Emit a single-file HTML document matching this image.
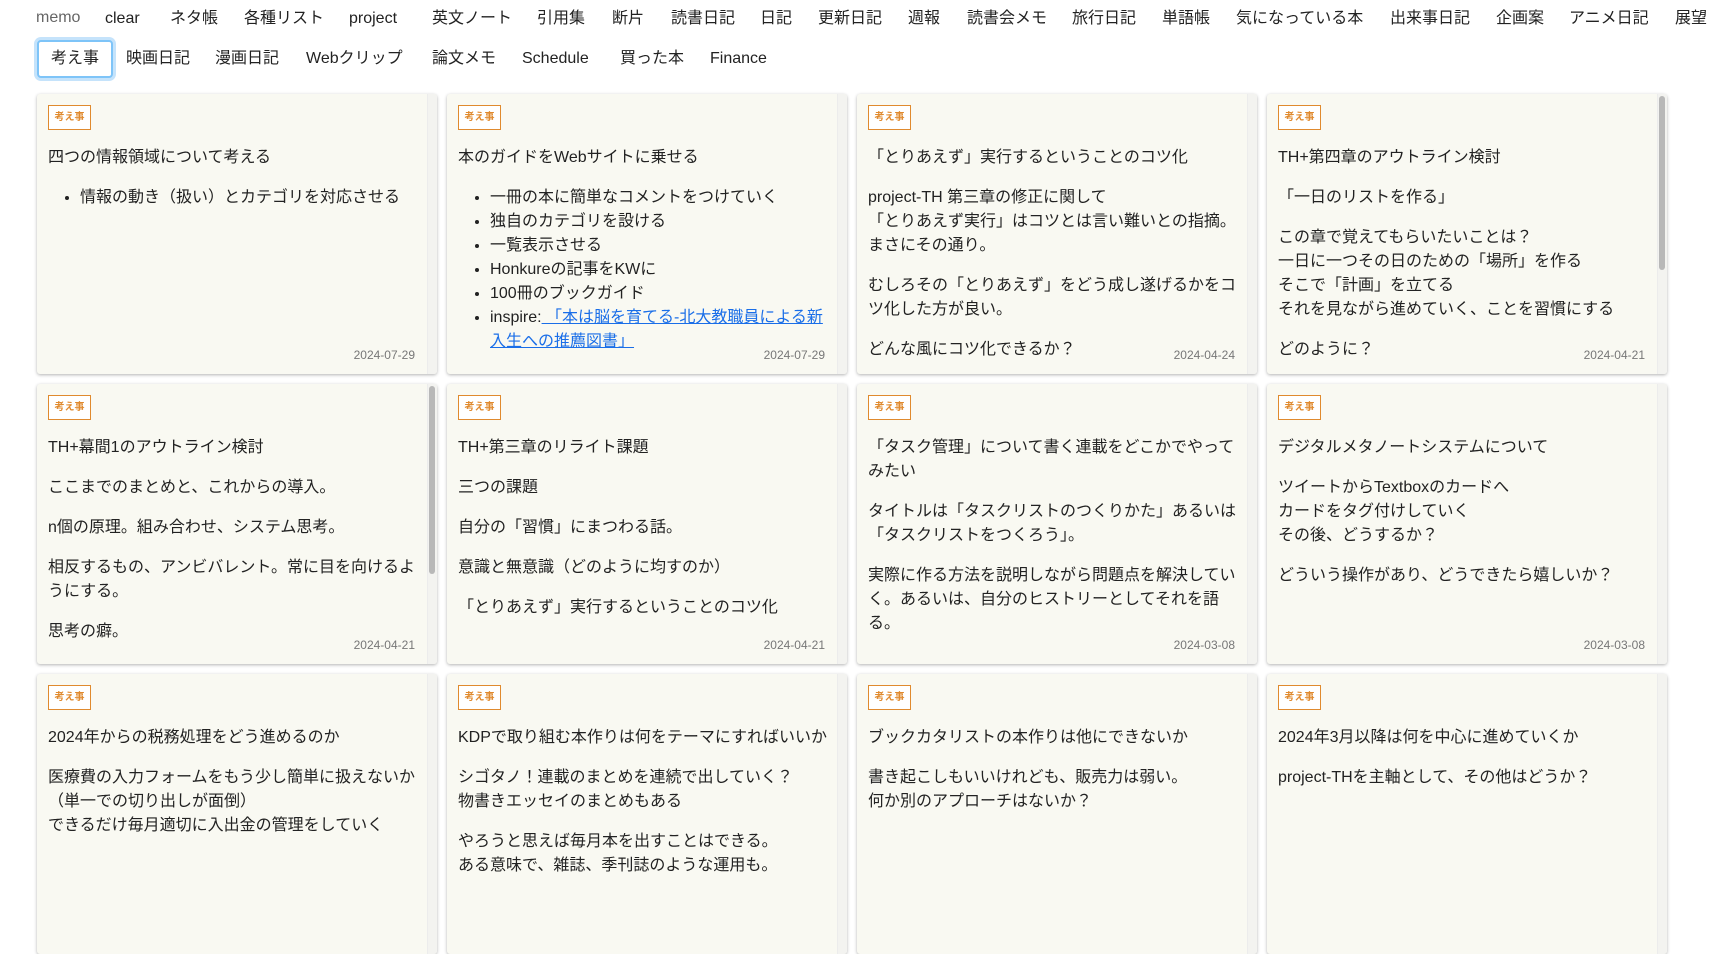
<!DOCTYPE html>
<html><head><meta charset="utf-8"><style>
*{box-sizing:border-box}
body{margin:0;width:1723px;height:881px;overflow:hidden;background:#fff;font-family:"Liberation Sans","Noto Sans CJK JP",sans-serif;color:#222}
.n{position:absolute;font-size:16px;line-height:20px;white-space:nowrap;color:#222}
.memo{color:#666;font-size:16px}
.btn{position:absolute;left:37px;top:40px;width:76px;height:38px;border:2px solid #7ec4f8;box-shadow:0 0 0 3px #c5e3fb;border-radius:4px;font-size:16px;line-height:34px;text-align:center;background:#fff}
.card{position:absolute;width:400px;height:280px;background:#f9f9f2;border-radius:3px;box-shadow:0 1px 3px rgba(0,0,0,.3);overflow:hidden}
.track{position:absolute;right:0;top:0;bottom:0;width:10px;background:#f3f3f0;border-left:1px solid #ececec}
.thumb{position:absolute;right:2px;width:6px;background:#b8b8b8;border-radius:3px}
.in{position:absolute;left:11px;top:11px;right:16px;font-size:16px;line-height:24px}
.tag{display:block;width:43px;border:1px solid #e08a2e;color:#e08a2e;font-size:10px;line-height:23px;height:25px;text-align:center;background:#fff;font-weight:bold}
.in p{margin:16px 0 0}
.in ul{margin:16px 0 0;padding-left:32px}
.in a{color:#1a6ee8;text-decoration:underline}
.date{position:absolute;right:22px;bottom:12px;font-size:12px;color:#777;line-height:14px}
</style></head><body>
<div class="n memo" style="left:36px;top:8px">memo</div>
<div class="n" style="left:105px;top:9px">clear</div>
<div class="n" style="left:170px;top:9px">ネタ帳</div>
<div class="n" style="left:244px;top:9px">各種リスト</div>
<div class="n" style="left:349px;top:9px">project</div>
<div class="n" style="left:432px;top:9px">英文ノート</div>
<div class="n" style="left:537px;top:9px">引用集</div>
<div class="n" style="left:612px;top:9px">断片</div>
<div class="n" style="left:671px;top:9px">読書日記</div>
<div class="n" style="left:760px;top:9px">日記</div>
<div class="n" style="left:818px;top:9px">更新日記</div>
<div class="n" style="left:908px;top:9px">週報</div>
<div class="n" style="left:967px;top:9px">読書会メモ</div>
<div class="n" style="left:1072px;top:9px">旅行日記</div>
<div class="n" style="left:1162px;top:9px">単語帳</div>
<div class="n" style="left:1236px;top:9px">気になっている本</div>
<div class="n" style="left:1390px;top:9px">出来事日記</div>
<div class="n" style="left:1496px;top:9px">企画案</div>
<div class="n" style="left:1569px;top:9px">アニメ日記</div>
<div class="n" style="left:1675px;top:9px">展望</div>
<div class="btn">考え事</div>
<div class="n" style="left:126px;top:49px">映画日記</div>
<div class="n" style="left:215px;top:49px">漫画日記</div>
<div class="n" style="left:306px;top:49px">Webクリップ</div>
<div class="n" style="left:432px;top:49px">論文メモ</div>
<div class="n" style="left:522px;top:49px">Schedule</div>
<div class="n" style="left:620px;top:49px">買った本</div>
<div class="n" style="left:710px;top:49px">Finance</div>

<div class="card" style="left:37px;top:94px"><div class="track"></div><div class="in"><span class="tag">考え事</span><p>四つの情報領域について考える</p><ul><li>情報の動き（扱い）とカテゴリを対応させる</li></ul></div><div class="date">2024-07-29</div></div>
<div class="card" style="left:447px;top:94px"><div class="track"></div><div class="in"><span class="tag">考え事</span><p>本のガイドをWebサイトに乗せる</p><ul><li>一冊の本に簡単なコメントをつけていく</li><li>独自のカテゴリを設ける</li><li>一覧表示させる</li><li>Honkureの記事をKWに</li><li>100冊のブックガイド</li><li>inspire:<a> 「本は脳を育てる-北大教職員による新入生への推薦図書」</a></li></ul></div><div class="date">2024-07-29</div></div>
<div class="card" style="left:857px;top:94px"><div class="track"></div><div class="in"><span class="tag">考え事</span><p>「とりあえず」実行するということのコツ化</p><p>project-TH 第三章の修正に関して<br>「とりあえず実行」はコツとは言い難いとの指摘。<br>まさにその通り。</p><p>むしろその「とりあえず」をどう成し遂げるかをコツ化した方が良い。</p><p>どんな風にコツ化できるか？</p></div><div class="date">2024-04-24</div></div>
<div class="card" style="left:1267px;top:94px"><div class="track"><div class="thumb" style="top:2px;height:174px"></div></div><div class="in"><span class="tag">考え事</span><p>TH+第四章のアウトライン検討</p><p>「一日のリストを作る」</p><p>この章で覚えてもらいたいことは？<br>一日に一つその日のための「場所」を作る<br>そこで「計画」を立てる<br>それを見ながら進めていく、ことを習慣にする</p><p>どのように？</p></div><div class="date">2024-04-21</div></div>

<div class="card" style="left:37px;top:384px"><div class="track"><div class="thumb" style="top:2px;height:188px"></div></div><div class="in"><span class="tag">考え事</span><p>TH+幕間1のアウトライン検討</p><p>ここまでのまとめと、これからの導入。</p><p>n個の原理。組み合わせ、システム思考。</p><p>相反するもの、アンビバレント。常に目を向けるようにする。</p><p>思考の癖。</p></div><div class="date">2024-04-21</div></div>
<div class="card" style="left:447px;top:384px"><div class="track"></div><div class="in"><span class="tag">考え事</span><p>TH+第三章のリライト課題</p><p>三つの課題</p><p>自分の「習慣」にまつわる話。</p><p>意識と無意識（どのように均すのか）</p><p>「とりあえず」実行するということのコツ化</p></div><div class="date">2024-04-21</div></div>
<div class="card" style="left:857px;top:384px"><div class="track"></div><div class="in"><span class="tag">考え事</span><p>「タスク管理」について書く連載をどこかでやってみたい</p><p>タイトルは「タスクリストのつくりかた」あるいは「タスクリストをつくろう」。</p><p>実際に作る方法を説明しながら問題点を解決していく。あるいは、自分のヒストリーとしてそれを語る。</p></div><div class="date">2024-03-08</div></div>
<div class="card" style="left:1267px;top:384px"><div class="track"></div><div class="in"><span class="tag">考え事</span><p>デジタルメタノートシステムについて</p><p>ツイートからTextboxのカードへ<br>カードをタグ付けしていく<br>その後、どうするか？</p><p>どういう操作があり、どうできたら嬉しいか？</p></div><div class="date">2024-03-08</div></div>

<div class="card" style="left:37px;top:674px"><div class="track"></div><div class="in"><span class="tag">考え事</span><p>2024年からの税務処理をどう進めるのか</p><p>医療費の入力フォームをもう少し簡単に扱えないか（単一での切り出しが面倒）<br>できるだけ毎月適切に入出金の管理をしていく</p></div></div>
<div class="card" style="left:447px;top:674px"><div class="track"></div><div class="in"><span class="tag">考え事</span><p>KDPで取り組む本作りは何をテーマにすればいいか</p><p>シゴタノ！連載のまとめを連続で出していく？<br>物書きエッセイのまとめもある</p><p>やろうと思えば毎月本を出すことはできる。<br>ある意味で、雑誌、季刊誌のような運用も。</p></div></div>
<div class="card" style="left:857px;top:674px"><div class="track"></div><div class="in"><span class="tag">考え事</span><p>ブックカタリストの本作りは他にできないか</p><p>書き起こしもいいけれども、販売力は弱い。<br>何か別のアプローチはないか？</p></div></div>
<div class="card" style="left:1267px;top:674px"><div class="track"></div><div class="in"><span class="tag">考え事</span><p>2024年3月以降は何を中心に進めていくか</p><p>project-THを主軸として、その他はどうか？</p></div></div>
</body></html>
